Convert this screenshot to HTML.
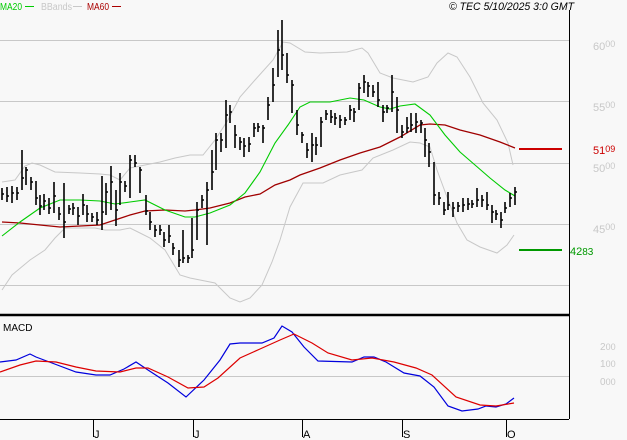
<!DOCTYPE html>
<html><head><meta charset="utf-8"><style>
html,body{margin:0;padding:0;background:#f8f8f8;}
svg{display:block;font-family:"Liberation Sans",sans-serif;}
</style></head><body>
<svg width="627" height="440" viewBox="0 0 627 440" xmlns="http://www.w3.org/2000/svg">
<rect width="627" height="440" fill="#f8f8f8"/>
<g stroke="#c8c8c8" stroke-width="1">
<path d="M0 40.5H569M0 101.5H569M0 163.5H569M0 224.5H569M0 285.5H569M0 376.5H569"/>
</g>
<text x="0" y="10" font-size="10" fill="#00cc00" textLength="22" lengthAdjust="spacingAndGlyphs">MA20</text>
<path d="M25 6.5H34" stroke="#00cc00" stroke-width="1"/>
<text x="41" y="10" font-size="10" fill="#c8c8c8" textLength="31" lengthAdjust="spacingAndGlyphs">BBands</text>
<path d="M73 6.5H82" stroke="#c8c8c8"/>
<text x="87" y="10" font-size="10" fill="#aa0000" textLength="22" lengthAdjust="spacingAndGlyphs">MA60</text>
<path d="M112 6.5H121" stroke="#aa0000"/>
<text x="449" y="10" font-size="11" font-style="italic" fill="#000" textLength="125" lengthAdjust="spacingAndGlyphs">© TEC 5/10/2025 3:0 GMT</text>
<g fill="none" stroke="#c8c8c8" stroke-width="1">
<polyline points="2,182 15,180 25,166 32,163 40,165 55,172 80,173 100,174 110,175 120,180 130,168 145,165 160,162 175,158 190,155 203,155 215,140 228,120 240,97 255,80 273,60 283,42 290,43 305,52 320,53 347,52 362,48 368,53 380,73 393,78 413,82 428,77 437,63 448,53 457,57 470,77 483,103 497,120 508,143 513,165"/>
<polyline points="2,290 12,275 30,260 45,250 55,238 65,228 80,228 95,228 105,230 120,230 130,228 140,233 150,238 165,250 180,275 190,278 215,283 230,298 240,302 250,298 262,285 272,262 280,240 290,207 303,183 323,183 340,175 362,170 373,158 393,150 410,142 420,143 430,147 437,170 447,197 457,223 467,240 480,247 497,253 507,245 514,235"/>
</g>
<polyline fill="none" stroke="#a00000" stroke-width="1.3" points="2,222 20,223 40,225 60,227 80,226 100,225 115,220 130,215 145,211 165,210 185,211 195,210 210,208 230,203 245,197 260,194 275,185 290,180 300,175 320,168 340,160 360,153 380,147 400,137 420,125 430,124 445,125 460,130 480,135 500,142 515,148"/>
<polyline fill="none" stroke="#00cc00" stroke-width="1.1" points="2,236 20,222 40,208 60,200 80,200 100,201 115,204 130,202 145,200 165,210 185,217 195,217 210,213 230,205 245,193 260,172 275,143 288,125 300,107 310,102 330,102 350,98 364,100 380,107 390,109 400,106 415,104 430,115 445,135 460,152 475,165 490,178 505,190 515,196"/>
<path fill="none" stroke="#000" stroke-width="1.6" d="
M2 188V200M2 194h2M7 187V202M7 196h2M12 186V203M12 193h2M17 187V200M17 193h2M22 150V190M22 178h2M26 167V185M26 170h2M31 177V190M31 182h2M36 181V205M36 198h2M40 195V215M40 206h2M44 194V210M44 201h2M49 198V214M49 208h2M54 182V213M54 196h2M59 207V220M59 214h2M64 183V238M64 222h2M69 205V214M69 209h2M73 203V215M73 208h2M78 207V225M78 216h2M83 194V215M83 205h2M87 205V222M87 214h2M92 213V222M92 217h2M97 212V225M97 220h2M102 176V230M102 212h2M106 183V215M106 192h2M111 166V210M111 182h2M116 190V226M116 210h2M120 173V205M120 182h2M125 181V192M125 186h2M130 155V198M130 160h2M135 155V167M135 163h2M140 167V193M140 170h2M146 195V215M146 211h2M150 212V230M150 222h2M155 225V237M155 230h2M160 225V235M160 230h2M164 232V247M164 240h2M169 225V243M169 236h2M173 243V255M173 248h2M179 250V267M179 260h2M183 230V263M183 258h2M188 255V263M188 258h2M192 218V258M192 250h2M197 202V240M197 210h2M202 195V208M202 200h2M207 182V245M207 190h2M212 150V190M212 172h2M216 133V170M216 140h2M221 133V152M221 140h2M226 100V148M226 115h2M230 105V123M230 112h2M235 125V148M235 135h2M240 137V150M240 142h2M244 138V157M244 146h2M249 137V152M249 144h2M254 123V137M254 128h2M258 123V132M258 127h2M263 125V143M263 128h2M268 97V120M268 105h2M273 68V102M273 85h2M278 30V77M278 50h2M282 20V70M282 55h2M287 53V83M287 75h2M292 80V113M292 85h2M297 110V135M297 125h2M302 132V143M302 135h2M307 143V158M307 150h2M312 133V162M312 145h2M316 137V155M316 145h2M321 117V147M321 122h2M326 110V120M326 114h2M331 110V123M331 117h2M335 113V125M335 118h2M340 115V128M340 120h2M345 117V125M345 120h2M350 105V120M350 110h2M354 108V122M354 112h2M359 83V110M359 88h2M364 75V93M364 82h2M368 82V97M368 86h2M373 85V97M373 92h2M378 82V107M378 100h2M383 105V122M383 112h2M387 105V113M387 108h2M392 75V112M392 92h2M397 97V133M397 110h2M402 125V138M402 132h2M407 117V133M407 128h2M411 113V132M411 125h2M416 113V133M416 122h2M421 120V133M421 123h2M425 128V157M425 140h2M429 143V167M429 152h2M434 162V205M434 195h2M439 192V205M439 198h2M444 202V215M444 210h2M448 192V210M448 205h2M453 202V217M453 208h2M458 202V212M458 206h2M463 198V212M463 205h2M468 198V210M468 204h2M472 200V208M472 204h2M477 188V207M477 200h2M482 195V207M482 200h2M487 192V210M487 205h2M492 205V223M492 212h2M496 210V220M496 214h2M501 212V228M501 220h2M505 202V213M505 208h2M510 193V207M510 198h2M515 187V205M515 192h2"/>
<path d="M519 149H562" stroke="#cc0000" stroke-width="2"/>
<path d="M519 250H562" stroke="#009900" stroke-width="2"/>
<text x="593" y="154" font-size="11" fill="#cc0000">51<tspan font-size="9" dy="-2">09</tspan></text>
<text x="570" y="255" font-size="11" fill="#009900">42<tspan font-size="10">83</tspan></text>
<g font-size="11" fill="#c8c8c8">
<text x="593" y="50">60<tspan font-size="9" dy="-3">00</tspan></text>
<text x="593" y="111">55<tspan font-size="9" dy="-3">00</tspan></text>
<text x="593" y="172">50<tspan font-size="9" dy="-3">00</tspan></text>
<text x="593" y="233">45<tspan font-size="9" dy="-3">00</tspan></text>
<text x="600" y="350" font-size="10">2<tspan font-size="9">00</tspan></text>
<text x="600" y="367" font-size="10">1<tspan font-size="9">00</tspan></text>
<text x="600" y="385" font-size="10">0<tspan font-size="9">00</tspan></text>
</g>
<path d="M569.5 10V419" stroke="#000" stroke-width="1"/>
<path d="M0 315H569" stroke="#000" stroke-width="2.5"/>
<path d="M0 419.5H569" stroke="#000" stroke-width="1"/>
<text x="3" y="331" font-size="10" fill="#000">MACD</text>
<polyline fill="none" stroke="#0000dd" stroke-width="1.2" points="0,362 16,360 30,354 36,357 52,363 76,372 96,375 110,375 124,369 136,362 148,370 168,383 186,397 204,380 220,360 230,344 240,343 262,343 274,338 282,326 292,332 304,347 318,361 352,362 364,357 374,357 386,362 404,373 420,376 434,387 448,406 462,411 478,409 486,406 496,407 506,404 514,398"/>
<polyline fill="none" stroke="#dd0000" stroke-width="1.2" points="0,372 20,365 36,361 56,362 76,367 96,371 120,372 136,368 148,368 168,377 188,388 204,387 218,378 240,358 260,349 280,340 294,334 312,343 328,353 352,360 372,358 394,362 416,368 432,375 456,397 480,405 496,406 514,403"/>
<path d="M93.5 420V437M193.5 420V437M302.5 420V437M402.5 420V437M506.5 420V437" stroke="#000" stroke-width="1"/>
<g font-size="11" fill="#000">
<text x="94" y="438">J</text>
<text x="194" y="438">J</text>
<text x="303" y="438">A</text>
<text x="403" y="438">S</text>
<text x="507" y="438">O</text>
</g>
</svg>
</body></html>
